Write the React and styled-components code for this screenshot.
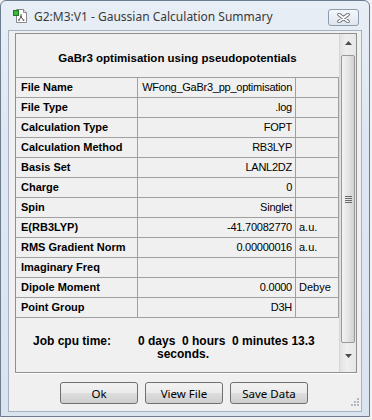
import React from 'react';
import styled, { createGlobalStyle } from 'styled-components';

const GlobalStyle = createGlobalStyle`
  body {
    margin: 0;
    background: #f2f2f2;
    font-family: "Liberation Sans", Arial, sans-serif;
  }
`;

const Window = styled.div`
  position: relative;
  box-sizing: border-box;
  width: 370px;
  height: 417px;
  border: 1px solid #6d7c8e;
  border-radius: 6px 6px 0 0;
  background: linear-gradient(to bottom, #e8eef5 0%, #dfe8f2 30%, #d9e4ef 100%);
  padding: 0 7px 4px 7px;
  display: flex;
  flex-direction: column;
`;

const TitleBar = styled.div`
  height: 29px;
  display: flex;
  align-items: center;
  padding-left: 5px;
  gap: 5px;
`;

const Title = styled.span`
  font-family: "Noto Sans", "Open Sans", sans-serif;
  font-size: 12px;
  color: #3a3a3a;
  margin-top: 1px;
`;

const CloseButton = styled.div`
  margin-left: auto;
  margin-right: 3px;
  margin-top: 4px;
  width: 29px;
  height: 15px;
  border: 1px solid #8d9bad;
  border-radius: 3px;
  background: linear-gradient(to bottom, #f4f7fb, #dfe6ee);
  display: flex;
  align-items: center;
  justify-content: center;
`;

const Client = styled.div`
  flex: 1;
  background: #f0f0f0;
  border: 1px solid #a3b1c2;
  padding: 2px 4px 0 6px;
  display: flex;
  flex-direction: column;
`;

const Panel = styled.div`
  box-sizing: border-box;
  height: 340px;
  border: 1px solid #8e8f8f;
  box-shadow: 0 1px 0 #ffffff;
  display: flex;
  background: #f0f0f0;
`;

const Content = styled.div`
  width: 323px;
  display: flex;
  flex-direction: column;
`;

const Heading = styled.div`
  height: 43px;
  box-sizing: border-box;
  padding-top: 17px;
  text-align: center;
  font-size: 11.5px;
  line-height: 14px;
  font-weight: bold;
  color: #000;
`;

const Grid = styled.div`
  display: grid;
  grid-template-columns: 122px 158px 43px;
  border-top: 1px solid #a0a0a0;
`;

const Cell = styled.div`
  box-sizing: border-box;
  height: 20px;
  border-right: 1px solid #a0a0a0;
  border-bottom: 1px solid #a0a0a0;
  font-size: 11px;
  line-height: 19px;
  padding: 0 3px 0 ${p => (p.$label ? '5px' : '3px')};
  font-weight: ${p => (p.$label ? 'bold' : 'normal')};
  text-align: ${p => (p.$right ? 'right' : 'left')};
  letter-spacing: ${p => (p.$right ? '-0.25px' : '0')};
  color: #000;
  white-space: nowrap;
  overflow: hidden;
`;

const CpuTime = styled.div`
  display: grid;
  grid-template-columns: 105px 1fr;
  padding: 17px 0 0 17px;
  font-size: 12px;
  line-height: 13px;
  font-weight: bold;
  color: #000;
`;

const CpuValue = styled.div`
  white-space: pre;
`;

const Wrapped = styled.div`
  padding-left: 19px;
`;

const Scrollbar = styled.div`
  width: 17px;
  display: flex;
  flex-direction: column;
  align-items: center;
  background: linear-gradient(to right, #e2e2e2, #eeeeee 40%, #e6e6e6);
  border-left: 1px solid #d6d6d6;
  box-sizing: border-box;
`;

const Arrow = styled.div`
  height: 17px;
  width: 100%;
  display: flex;
  align-items: center;
  justify-content: center;
  color: #4d4d4d;
`;

const Thumb = styled.div`
  box-sizing: border-box;
  width: 14px;
  height: 288px;
  margin: 4px 0;
  border: 1px solid #989898;
  border-radius: 2px;
  background: linear-gradient(to right, #f3f3f3, #e4e4e4 50%, #d2d2d2);
  display: flex;
  align-items: center;
  justify-content: center;
`;

const Buttons = styled.div`
  display: flex;
  justify-content: center;
  gap: 7px;
  margin-top: 9px;
  padding-right: 4px;
`;

const Button = styled.button`
  box-sizing: border-box;
  width: 78px;
  height: 22px;
  border: 1px solid #707070;
  border-radius: 3px;
  background: linear-gradient(to bottom, #f2f2f2 0%, #ebebeb 48%, #dddddd 52%, #cfcfcf 100%);
  font-family: "Noto Sans", "Open Sans", sans-serif;
  font-size: 11.5px;
  color: #000;
  padding: 0;
`;

const Grip = styled.svg`
  position: absolute;
  right: 10px;
  bottom: 10px;
`;

const rows = [
  ['File Name', 'WFong_GaBr3_pp_optimisation', ''],
  ['File Type', '.log', ''],
  ['Calculation Type', 'FOPT', ''],
  ['Calculation Method', 'RB3LYP', ''],
  ['Basis Set', 'LANL2DZ', ''],
  ['Charge', '0', ''],
  ['Spin', 'Singlet', ''],
  ['E(RB3LYP)', '-41.70082770', 'a.u.'],
  ['RMS Gradient Norm', '0.00000016', 'a.u.'],
  ['Imaginary Freq', '', ''],
  ['Dipole Moment', '0.0000', 'Debye'],
  ['Point Group', 'D3H', ''],
];

function AppIcon() {
  return (
    <svg width="16" height="16" viewBox="0 0 16 16">
      <path d="M3.5 1.5h7l3 3v10h-10z" fill="#fff" stroke="#8a8a8a" />
      <path d="M10.5 1.5v3h3" fill="#e8e8e8" stroke="#8a8a8a" />
      <line x1="8" y1="6" x2="8" y2="9" stroke="#555" />
      <line x1="8" y1="9" x2="6" y2="12" stroke="#555" />
      <line x1="8" y1="9" x2="10.5" y2="12" stroke="#555" />
      <circle cx="8" cy="9" r="1.2" fill="#666" />
      <circle cx="6" cy="12" r="1" fill="#777" />
      <circle cx="10.5" cy="12" r="1" fill="#777" />
      <rect x="0.5" y="2.5" width="5" height="5" fill="#3cb63c" stroke="#1f7a1f" />
    </svg>
  );
}

function App() {
  return (
    <>
      <GlobalStyle />
      <Window>
        <TitleBar>
          <AppIcon />
          <Title>G2:M3:V1 - Gaussian Calculation Summary</Title>
          <CloseButton>
            <svg width="13" height="10" viewBox="0 0 13 10">
              <path d="M2 1.5l9 7M11 1.5l-9 7" stroke="#6b6f75" strokeWidth="3.6" strokeLinecap="round" />
              <path d="M2 1.5l9 7M11 1.5l-9 7" stroke="#ffffff" strokeWidth="1.8" strokeLinecap="round" />
            </svg>
          </CloseButton>
        </TitleBar>
        <Client>
          <Panel>
            <Content>
              <Heading>GaBr3 optimisation using pseudopotentials</Heading>
              <Grid>
                {rows.map(([label, value, unit]) => (
                  <React.Fragment key={label}>
                    <Cell $label>{label}</Cell>
                    <Cell $right>{value}</Cell>
                    <Cell>{unit}</Cell>
                  </React.Fragment>
                ))}
              </Grid>
              <CpuTime>
                <div>Job cpu time:</div>
                <CpuValue>
                  {'0 days  0 hours  0 minutes 13.3'}
                  <Wrapped>seconds.</Wrapped>
                </CpuValue>
              </CpuTime>
            </Content>
            <Scrollbar>
              <Arrow>
                <svg width="7" height="4" viewBox="0 0 7 4"><path d="M3.5 0L7 4H0z" fill="#4d4d4d" /></svg>
              </Arrow>
              <Thumb>
                <svg width="7" height="7" viewBox="0 0 7 7">
                  <path d="M0 0.5h7M0 2.5h7M0 4.5h7M0 6.5h7" stroke="#6a6a6a" />
                </svg>
              </Thumb>
              <Arrow>
                <svg width="7" height="4" viewBox="0 0 7 4"><path d="M0 0h7L3.5 4z" fill="#4d4d4d" /></svg>
              </Arrow>
            </Scrollbar>
          </Panel>
          <Buttons>
            <Button>Ok</Button>
            <Button>View File</Button>
            <Button>Save Data</Button>
          </Buttons>
        </Client>
        <Grip width="8" height="8" viewBox="0 0 8 8">
          <rect x="6" y="0" width="2" height="2" fill="#b0b8c2" />
          <rect x="3" y="3" width="2" height="2" fill="#b0b8c2" />
          <rect x="6" y="3" width="2" height="2" fill="#b0b8c2" />
          <rect x="0" y="6" width="2" height="2" fill="#b0b8c2" />
          <rect x="3" y="6" width="2" height="2" fill="#b0b8c2" />
          <rect x="6" y="6" width="2" height="2" fill="#b0b8c2" />
        </Grip>
      </Window>
    </>
  );
}

export default App;
